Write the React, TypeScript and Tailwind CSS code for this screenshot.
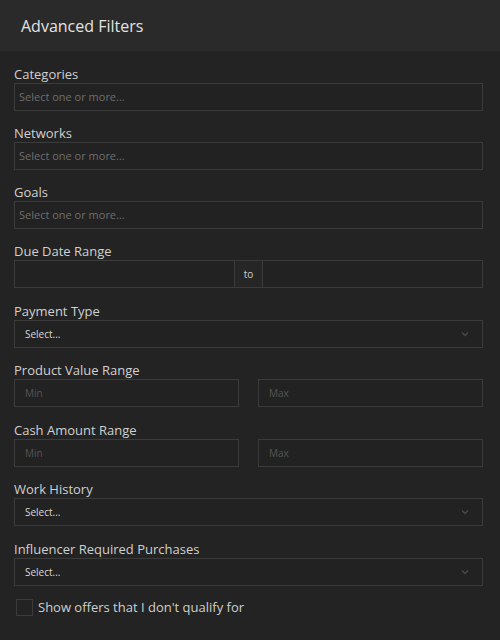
import React from 'react';

const font = { fontFamily: '"Open Sans", "Noto Sans", sans-serif' };

function Label({ children }: { children: React.ReactNode }) {
  return <div className="h-[17px] text-[13px] leading-[17px] text-[#d0d0d0]">{children}</div>;
}

function MultiSelect({ label }: { label: string }) {
  return (
    <div>
      <Label>{label}</Label>
      <div className="flex h-[28px] items-center border border-[#3b3b3b] bg-[#222222] px-[4px] text-[11px] text-[#6e6e6e]">
        Select one or more...
      </div>
    </div>
  );
}

function Chevron() {
  return (
    <svg width="10" height="10" viewBox="0 0 10 10" fill="none" className="text-[#4a4a4a]">
      <path d="M2 3.5 L5 6.5 L8 3.5" stroke="currentColor" strokeWidth="1.3" />
    </svg>
  );
}

function SingleSelect({ label, className = '' }: { label: string; className?: string }) {
  return (
    <div className={className}>
      <Label>{label}</Label>
      <div className="flex h-[28px] items-center justify-between border border-[#3b3b3b] bg-[#222222] pl-[10px] pr-[12px] text-[10px] text-[#d8d8d8]">
        <span>Select...</span>
        <Chevron />
      </div>
    </div>
  );
}

function Range({ label, className = '' }: { label: string; className?: string }) {
  return (
    <div className={className}>
      <Label>{label}</Label>
      <div className="grid grid-cols-2 gap-[19px]">
        <div className="flex h-[28px] items-center border border-[#3b3b3b] bg-[#222222] px-[10px] text-[10px] text-[#555555]">
          Min
        </div>
        <div className="flex h-[28px] items-center border border-[#3b3b3b] bg-[#222222] px-[10px] text-[10px] text-[#555555]">
          Max
        </div>
      </div>
    </div>
  );
}

function DateRange() {
  return (
    <div className="mb-[1px]">
      <Label>Due Date Range</Label>
      <div className="flex h-[28px] border border-[#3b3b3b] bg-[#222222]">
        <div className="flex-1" />
        <div className="flex w-[29px] items-center justify-center border-x border-[#3b3b3b] bg-[#262626] text-[10px] text-[#cfcfcf]">
          to
        </div>
        <div className="w-[219px]" />
      </div>
    </div>
  );
}

export default function App() {
  return (
    <div className="min-h-[640px] w-[500px] bg-[#232323]" style={font}>
      <div className="flex h-[51px] items-center bg-[#2a2a2a] px-[21px] text-[16px] text-[#e2e2e2]">
        Advanced Filters
      </div>
      <div className="flex flex-col gap-[14px] pl-[14px] pr-[17px] pt-[15px]">
        <MultiSelect label="Categories" />
        <MultiSelect label="Networks" />
        <MultiSelect label="Goals" />
        <DateRange />
        <SingleSelect label="Payment Type" />
        <Range label="Product Value Range" className="mb-[1px]" />
        <Range label="Cash Amount Range" />
        <SingleSelect label="Work History" className="mb-[1px]" />
        <SingleSelect label="Influencer Required Purchases" />
        <label className="mt-[-2px] flex items-center gap-[5px] pl-[2px]">
          <span className="h-[17px] w-[17px] border border-[#3b3b3b] bg-[#232323]" />
          <span className="text-[13px] text-[#cfcfcf]">Show offers that I don't qualify for</span>
        </label>
      </div>
    </div>
  );
}
